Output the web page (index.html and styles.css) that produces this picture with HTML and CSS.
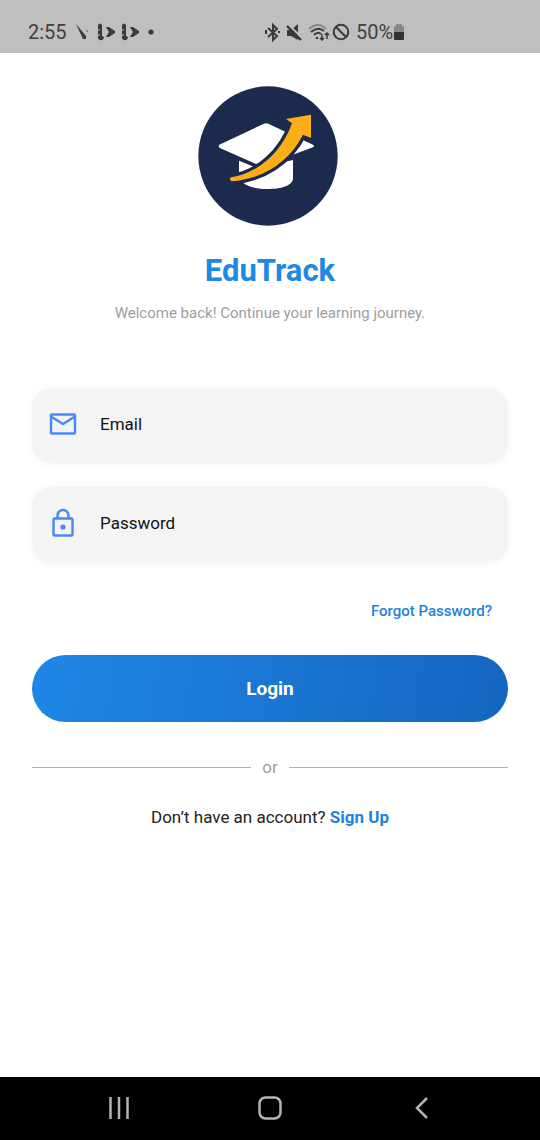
FILE: index.html
```html
<!DOCTYPE html>
<html lang="en">
<head>
  <meta charset="utf-8">
  <meta name="viewport" content="width=device-width, initial-scale=1">
  <title>EduTrack – Login</title>
  <link rel="stylesheet" href="styles.css">
</head>
<body>
  <header class="status">
    <div class="status-left">
      <span>2:55</span>
      <svg class="notices" viewBox="0 0 82 20" width="82" height="20" fill="#3a3a3a" aria-hidden="true">
        <path d="M1 2 L11 14 V17 H8 Z"/>
        <circle cx="12" cy="9" r="1" fill="#777"/>
        <g id="play">
          <path d="M23 3 Q25 0 27 3 V14 L29 15 Q28 19 25 18 Q23 18 23 15 Z"/>
          <path d="M31 5 L34 5 L40 9 V11 L34 15 L31 15 L34 10 Z"/>
          <path d="M22 8 H25 M22 13 H25" stroke="#bfbfbf" stroke-width="1"/>
        </g>
        <use href="#play" x="24"/>
        <circle cx="76" cy="10" r="2.600"/>
      </svg>
    </div>
    <div class="status-right">
      <svg viewBox="0 0 90 20" width="90" height="20" fill="none" stroke="#3a3a3a" stroke-width="2" aria-hidden="true">
        <path d="M4 6 L13 14 L9 18 V3 L13 7 L4 15 M2 8 V12 M14 10 H16"/>
        <path d="M23 8 H27 L34 2 V18 L27 14 H23 Z" fill="#3a3a3a" stroke="none"/>
        <path d="M24 2 L39 17" stroke="#bfbfbf" stroke-width="2"/>
        <path d="M23 4 L37 18" stroke-width="2.400"/>
        <path d="M45 7 Q54 -1 62 7" stroke="#888"/>
        <path d="M47 10 Q54 4 60 9 M50 13 Q54 9 57 12"/>
        <circle cx="53" cy="16" r="1.300" fill="#3a3a3a" stroke="none"/>
        <path d="M58 12 V18 M56 16 L58 18 L60 16 M63 17 V11 M61 13 L63 11 L65 13" stroke-width="1.500"/>
        <circle cx="77" cy="10" r="7.300"/>
        <path d="M72 5 L82 15"/>
      </svg>
      <span>50%</span>
      <svg viewBox="0 0 12 18" width="12" height="18" aria-hidden="true">
        <path d="M3 1 H9 V3 H11 V9 H1 V3 H3 Z" fill="#888"/>
        <path d="M1 9 H11 V16 Q11 17 10 17 H2 Q1 17 1 16 Z" fill="#333"/>
      </svg>
    </div>
  </header>

  <main class="page">
    <svg class="logo" viewBox="0 0 480 465" width="160" height="155" role="img" aria-label="EduTrack logo">
      <circle cx="234" cy="228" r="209" fill="#1c2a4e"/>
      <path d="M88 194 L222 131 Q228 128 235 131 L369 194 Q375 198 369 202 L290 231 L240 240 L198 252 L88 203 Q84 198 88 194 Z" fill="#fff"/>
      <path d="M147 242 L195 262 L272 248 L309 240 V294 C309 318 272 327 232 327 C200 327 170 320 158 307 L147 290 Z" fill="#fff"/>
      <path d="M123 292 C207 279 275 216 306 130 L288 117 L363 104 V174 L339 164 C298 245 220 297 125 304 Q116 298 123 292 Z" fill="#fbae17" stroke="#1c2a4e" stroke-width="20" paint-order="stroke"/>
    </svg>
    <h1 class="title">EduTrack</h1>
    <p class="subtitle">Welcome back! Continue your learning journey.</p>

    <form class="form">
      <label class="field">
        <svg viewBox="0 0 30 30" width="30" height="30" fill="none" stroke="#4788f5" stroke-width="2.4" stroke-linejoin="round" aria-hidden="true">
          <rect x="3" y="5.500" width="24" height="19" rx="1"/>
          <path d="M3 7.500 L15 15 L27 7.500"/>
        </svg>
        <input type="email" placeholder="Email" aria-label="Email">
      </label>
      <label class="field">
        <svg viewBox="0 0 30 30" width="30" height="30" fill="none" stroke="#4788f5" stroke-width="2.4" stroke-linejoin="round" aria-hidden="true">
          <rect x="5.500" y="10.500" width="19" height="17" rx="1"/>
          <path d="M9.500 10.500 V7.500 A5.500 5.500 0 0 1 20.500 7.500 V10.500"/>
          <circle cx="15" cy="19" r="2.600" fill="#4788f5" stroke="none"/>
        </svg>
        <input type="password" placeholder="Password" aria-label="Password">
      </label>
      <a class="forgot" href="#">Forgot Password?</a>
      <button class="login" type="submit">Login</button>
    </form>

    <div class="divider"><span>or</span></div>
    <p class="signup">Don’t have an account? <a href="#">Sign Up</a></p>
  </main>

  <nav class="navbar" aria-label="System">
    <button type="button" aria-label="Recent apps">
      <svg viewBox="0 0 26 26" width="26" height="26" fill="none" stroke="#b4b4b4" stroke-width="2.500"><path d="M4.500 2 V24 M13 2 V24 M21.500 2 V24"/></svg>
    </button>
    <button type="button" aria-label="Home">
      <svg viewBox="0 0 26 26" width="26" height="26" fill="none" stroke="#b4b4b4" stroke-width="2.500"><rect x="2.500" y="2.500" width="21" height="21" rx="6"/></svg>
    </button>
    <button type="button" aria-label="Back">
      <svg viewBox="0 0 26 26" width="26" height="26" fill="none" stroke="#b4b4b4" stroke-width="2.500"><path d="M19 3 L9 13 L19 23"/></svg>
    </button>
  </nav>
</body>
</html>
```
FILE: styles.css
```css
* {
  box-sizing: border-box;
}

body {
  margin: 0;
  min-height: 100vh;
  display: flex;
  flex-direction: column;
  background: #fff;
  color: #222;
  font-family: Roboto, "Liberation Sans", sans-serif;
}

a {
  color: #1e82dc;
  text-decoration: none;
}

svg {
  flex: none;
}

.status {
  display: grid;
  grid-template-columns: 236px 1fr;
  padding: 20px 28px 9px;
  background: #bfbfbf;
  color: #3f3f3f;
  font-size: 20px;
  line-height: 24px;
}

.status-left,
.status-right {
  display: flex;
  align-items: center;
}

.status-left {
  gap: 8px;
}

.status-right svg:first-child {
  margin-right: 2px;
}

.page {
  flex: 1;
  display: flex;
  flex-direction: column;
  align-items: center;
  padding: 27px 32px;
}

.title {
  margin: 16px 0 0;
  color: #1e88e5;
  font-size: 31px;
  line-height: 40px;
}

.subtitle {
  margin: 12px 0 0;
  color: #9e9e9e;
  font-size: 15px;
  line-height: 20px;
}

.form {
  width: 100%;
  margin-top: 65px;
  display: flex;
  flex-direction: column;
  gap: 24px;
}

.field {
  display: flex;
  align-items: center;
  gap: 22px;
  height: 75px;
  padding: 0 16px 3px;
  border-radius: 20px;
  background: #f4f4f4;
  box-shadow: 0 1px 8px #0000000d;
}

.field input {
  flex: 1;
  min-width: 0;
  padding: 0;
  border: 0;
  outline: 0;
  background: none;
  color: #111;
  font: 17px/24px Roboto, "Liberation Sans", sans-serif;
}

.field input::placeholder {
  color: #111;
  opacity: 1;
}

.forgot {
  align-self: flex-end;
  margin: 15px 16px 10px;
  font-size: 15px;
  font-weight: 500;
  line-height: 20px;
}

.login {
  height: 67px;
  border: 0;
  border-radius: 34px;
  background: linear-gradient(100deg, #1e88e5, #1565c0);
  color: #fff;
  font: 700 19px/24px Roboto, "Liberation Sans", sans-serif;
}

.divider {
  width: 100%;
  margin-top: 34px;
  display: flex;
  align-items: center;
  gap: 11px;
  color: #9e9e9e;
  font-size: 17px;
  line-height: 22px;
}

.divider::before,
.divider::after {
  content: "";
  flex: 1;
  height: 1px;
  background: #b0b0b0;
}

.signup {
  margin: 27px 0 0;
  font-size: 17px;
  line-height: 24px;
}

.signup a {
  font-weight: 700;
}

.navbar {
  display: flex;
  justify-content: center;
  gap: 125px;
  padding: 18px 0 19px;
  background: #000;
}

.navbar button {
  display: flex;
  padding: 0;
  border: 0;
  background: none;
}
```
